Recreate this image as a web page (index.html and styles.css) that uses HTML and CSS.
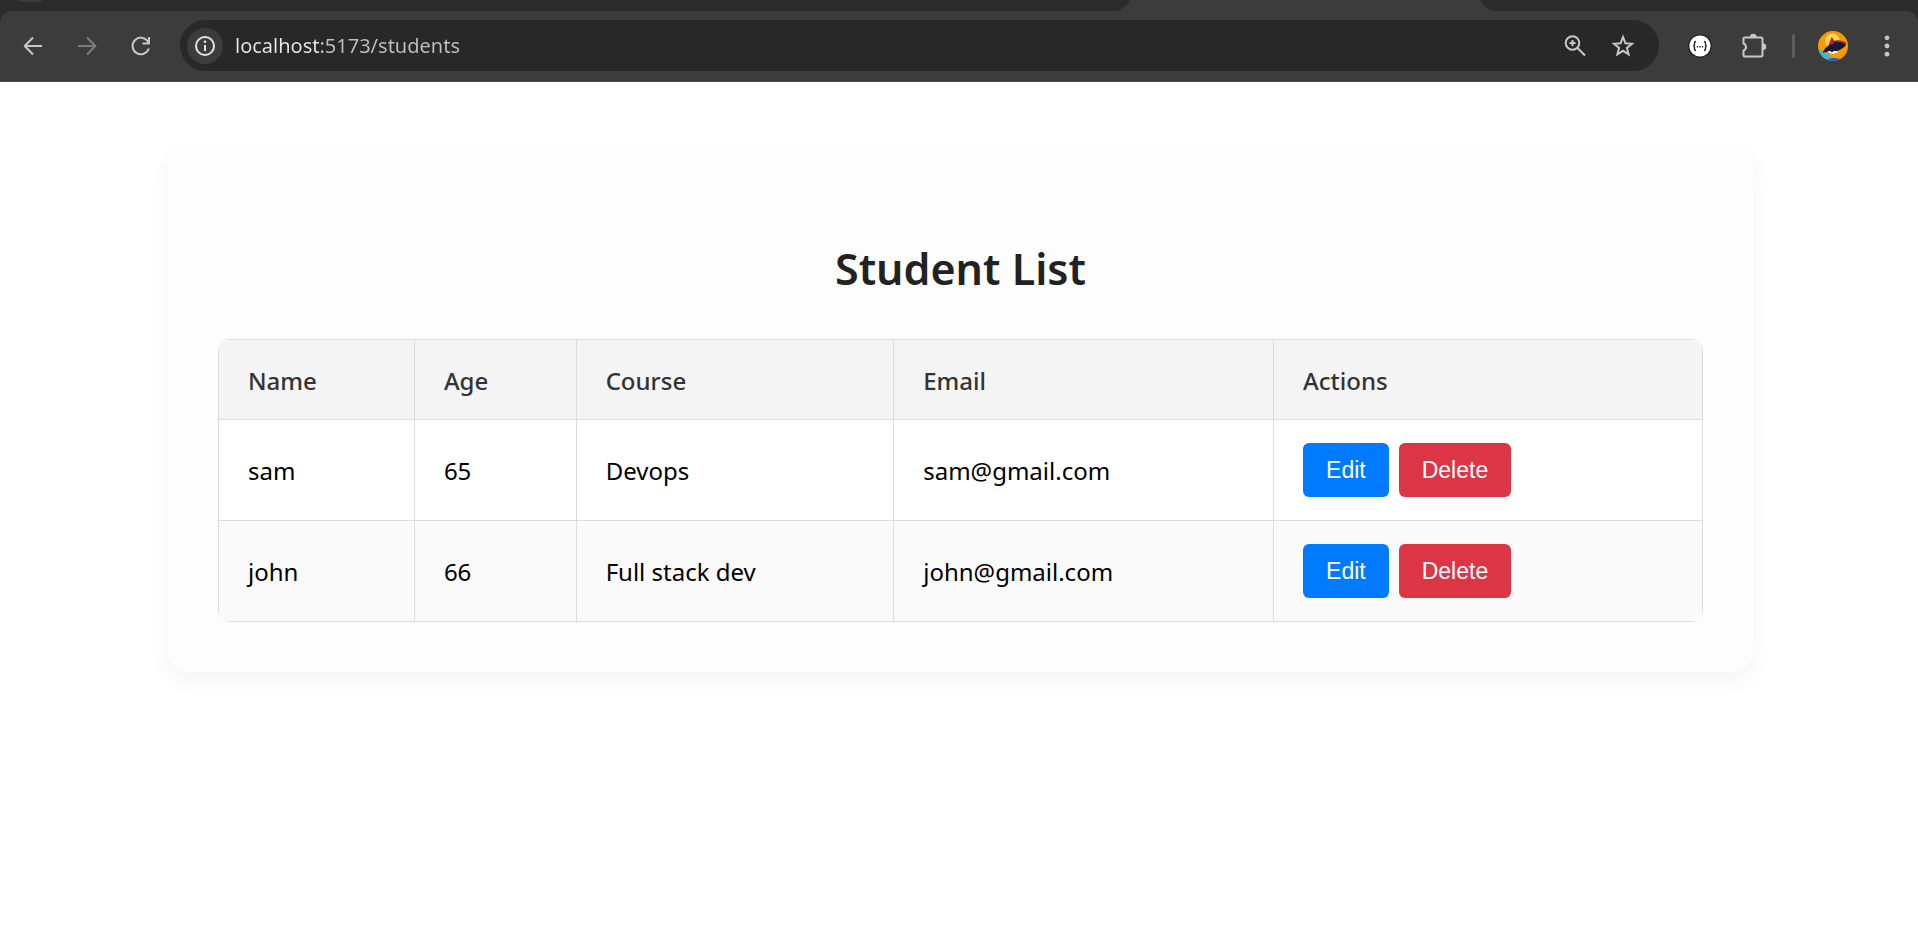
FILE: index.html
```html
<!DOCTYPE html>
<html lang="en">
<head>
<meta charset="utf-8">
<title>Student List</title>
<link rel="stylesheet" href="styles.css">
</head>
<body>
<header class="browser">
  <div class="tabstrip">
    <svg class="tab-hint" viewBox="0 0 28 3" width="28" height="3"><path d="M0 0h28q-4 2-9 2H9Q4 2 0 0z"/></svg>
    <svg class="tab-active" viewBox="0 0 376 11" preserveAspectRatio="none"><path d="M0 11Q9 8 13 0H363Q367 8 376 11z"/></svg>
  </div>
  <div class="toolbar">
    <nav class="nav">
      <button class="tool" type="button" aria-label="Back"><svg viewBox="0 0 24 24" width="24" height="24"><path class="line" d="M21 12H4.500M12 3.500 3.700 12l8.300 8.500"/></svg></button>
      <button class="tool dim" type="button" aria-label="Forward"><svg viewBox="0 0 24 24" width="24" height="24"><path class="line" d="M3 12h16.500M12 3.500 20.300 12 12 20.500"/></svg></button>
      <button class="tool" type="button" aria-label="Reload"><svg viewBox="0 0 24 24" width="24" height="24"><path class="line" d="M19.800 14.500A8.300 8.300 0 1 1 18.800 7.300L20 9M20 3v6.500h-6.500"/></svg></button>
    </nav>
    <div class="omnibox">
      <button class="site-info" type="button" aria-label="Site information"><svg viewBox="0 0 24 24" width="24" height="24"><circle class="line" cx="12" cy="12" r="9"/><path class="thin" d="M12 11v6"/><circle class="solid" cx="12" cy="7.700" r="1.300"/></svg></button>
      <input class="url" type="text" aria-label="Address" value="localhost:5173/students">
      <button class="tool small" type="button" aria-label="Zoom"><svg viewBox="0 0 24 24" width="24" height="24"><circle class="line" cx="9.500" cy="9" r="6.800"/><path class="line" d="M14.500 14 22 21.500M9.500 6v6M6.500 9h6"/></svg></button>
      <button class="tool small" type="button" aria-label="Bookmark this page"><svg viewBox="0 0 24 24" width="24" height="24"><path class="line miter" d="m12 3 2.400 6.200 6.600.5-5.100 4.200 1.700 6.400L12 16.800l-5.600 3.500 1.700-6.400L3 9.700l6.600-.5z"/></svg></button>
    </div>
    <div class="extensions">
      <button class="tool" type="button" aria-label="API extension"><svg viewBox="0 0 24 24" width="24" height="24"><circle cx="12" cy="12" r="11.800" fill="#222"/><circle cx="12" cy="12" r="10.600" fill="#fff"/><path d="M8 7.500Q6.500 7.500 6.500 9v1.500Q6.500 12 5.200 12q1.300 0 1.300 1.500V15q0 1.500 1.500 1.500M16 7.500q1.500 0 1.500 1.500v1.500q0 1.500 1.300 1.500-1.300 0-1.300 1.500V15q0 1.500-1.500 1.500" fill="none" stroke="#222" stroke-width="1.400"/><path d="M8.800 12.800h1.300m1.200 0h1.400m1.200 0h1.300" stroke="#222" stroke-width="1.400"/></svg></button>
      <button class="tool" type="button" aria-label="Extensions"><svg viewBox="0 0 26 26" width="26" height="26"><path class="line" d="M3.500 4.500H20a1.500 1.500 0 0 1 1.500 1.500v16a1.500 1.500 0 0 1-1.500 1.500H3.500a1 1 0 0 1-1-1v-5a3.700 3.700 0 0 0 0-7v-5a1 1 0 0 1 1-1z"/><path class="solid" d="M9 4a3.300 3.300 0 0 1 6.600 0zM22 10.500a3.300 3.300 0 0 1 0 6.600z"/></svg></button>
      <span class="divider"></span>
      <button class="tool" type="button" aria-label="Profile"><svg viewBox="0 0 30 30" width="30" height="30"><defs><clipPath id="avatar"><circle cx="15" cy="15" r="15"/></clipPath></defs><g clip-path="url(#avatar)"><path fill="#f59b00" d="M0 0h30v30H0z"/><circle cx="14.500" cy="10" r="7.500" fill="#ffd257"/><path fill="#35b8e0" d="M1 18l4 2 2 3 4 0 1 3 5 1-2 3H4z"/><path fill="#1d62c4" d="M10 28l4-1 3 0 6 1-3 2h-9z"/><path fill="#16183a" d="M4.500 21.500Q7 16.500 11 14l3-7.500 2 3.500q6-1.500 11.500 1.500 1 3.500-2 5-5 4-12 4.500-5 0-9 .5z"/><path fill="#c71f37" d="m11 13.500 2.500-7.500 1.500 4 2 1.500-3 2zM17 9.700q6-1 10.500 1.600l.3 1.700q-5-2.300-10-2z"/><path fill="#fff" d="M9 20.500l3.500-.5 1.500 2 1.500-2 3 0 2 1.500-3 .5-2.500 1-3-1z"/></g></svg></button>
      <button class="tool" type="button" aria-label="Menu"><svg viewBox="0 0 24 24" width="24" height="24"><circle class="solid" cx="12" cy="3.800" r="2.400"/><circle class="solid" cx="12" cy="12" r="2.400"/><circle class="solid" cx="12" cy="20.200" r="2.400"/></svg></button>
    </div>
  </div>
</header>
<main class="page">
  <section class="card">
    <h1 class="title">Student List</h1>
    <table class="students">
      <colgroup><col class="c-name"><col class="c-age"><col class="c-course"><col class="c-email"><col class="c-actions"></colgroup>
      <thead>
        <tr><th scope="col">Name</th><th scope="col">Age</th><th scope="col">Course</th><th scope="col">Email</th><th scope="col">Actions</th></tr>
      </thead>
      <tbody>
        <tr><td>sam</td><td>65</td><td>Devops</td><td>sam@gmail.com</td><td><div class="actions"><button class="btn edit" type="button">Edit</button><button class="btn delete" type="button">Delete</button></div></td></tr>
        <tr><td>john</td><td>66</td><td>Full stack dev</td><td>john@gmail.com</td><td><div class="actions"><button class="btn edit" type="button">Edit</button><button class="btn delete" type="button">Delete</button></div></td></tr>
      </tbody>
    </table>
  </section>
</main>
</body>
</html>
```
FILE: styles.css
```css
* { box-sizing: border-box; }
body {
  margin: 0;
  background: #fff;
  color: #000;
  font-family: "Segoe UI", "Noto Sans", "Open Sans", sans-serif;
  font-size: 24px;
}
button { font: inherit; border: 0; cursor: pointer; }

/* Browser chrome */
.browser { background: #2b2b2b; }
.tabstrip { position: relative; height: 11px; }
.tab-hint { position: absolute; left: 16px; top: 0; fill: #3c3c3c; }
.tab-active { position: absolute; left: 1117px; top: 0; width: 376px; height: 11px; fill: #3c3c3c; }
.toolbar {
  display: flex;
  align-items: center;
  height: 71px;
  padding: 0 15px 1px 17px;
  background: #3c3c3c;
  border-bottom: 1px solid #4a4748;
  border-radius: 12px 12px 0 0;
}
.nav { display: flex; gap: 22px; margin-right: 23px; }
.tool {
  display: flex;
  align-items: center;
  justify-content: center;
  width: 32px;
  height: 32px;
  padding: 0;
  background: none;
  color: #c7c7c7;
}
.dim { color: #7c7c7c; }
.line { fill: none; stroke: currentColor; stroke-width: 2; stroke-linejoin: round; }
.miter { stroke-linejoin: miter; }
.thin { fill: none; stroke: currentColor; stroke-width: 2; }
.solid { fill: currentColor; }
.omnibox {
  flex: 1;
  display: flex;
  align-items: center;
  gap: 16px;
  height: 51px;
  padding: 0 20px 0 7px;
  background: #282828;
  border-radius: 26px;
}
.site-info {
  display: flex;
  align-items: center;
  justify-content: center;
  width: 36px;
  height: 36px;
  margin-right: -4px;
  padding: 0;
  border-radius: 50%;
  background: #3c3c3c;
  color: #e3e3e3;
}
.url {
  flex: 1;
  min-width: 0;
  padding: 0;
  border: 0;
  outline: 0;
  font-family: inherit;
  font-size: 20px;
  line-height: 28px;
  background: linear-gradient(90deg, #e8e8e8 84px, #c0c0c0 84px);
  background-clip: text;
  -webkit-background-clip: text;
  color: transparent;
}
.extensions { display: flex; align-items: center; gap: 22px; margin-left: 25px; }
.divider { width: 3px; height: 24px; border-radius: 2px; background: #5e5e5e; }

/* Page */
.page { padding: 66px 165px 66px 168px; }
.card {
  padding: 88px 50px 50px;
  background: #fdfdfd;
  border-radius: 20px;
  box-shadow: 0 8px 24px rgba(0, 0, 0, 0.05);
}
.title {
  margin: 0 0 38px;
  color: #222;
  font-size: 43px;
  font-weight: 600;
  line-height: 65px;
  text-align: center;
}
.students {
  width: 100%;
  table-layout: fixed;
  border-collapse: collapse;
  border-radius: 12px;
  overflow: hidden;
  background: #fff;
}
.c-name { width: 13.2%; }
.c-age { width: 10.9%; }
.c-course { width: 21.4%; }
.c-email { width: 25.6%; }
.c-actions { width: 28.9%; }
.students th, .students td {
  padding: 23px 29px;
  border: 1px solid #ddd;
  text-align: left;
  line-height: 33px;
}
.students th { padding: 24px 29px 22px; background: #f4f4f4; color: #333; font-weight: 500; }
.students tbody tr:nth-child(even) { background: #fafafa; }
.actions { display: flex; gap: 10px; }
.btn {
  padding: 12px 23px;
  border-radius: 6px;
  color: #fff;
  font-family: Arial, "Liberation Sans", sans-serif;
  font-size: 23px;
  line-height: 30px;
}
.edit { background: #007bff; }
.delete { background: #dc3545; }
```
